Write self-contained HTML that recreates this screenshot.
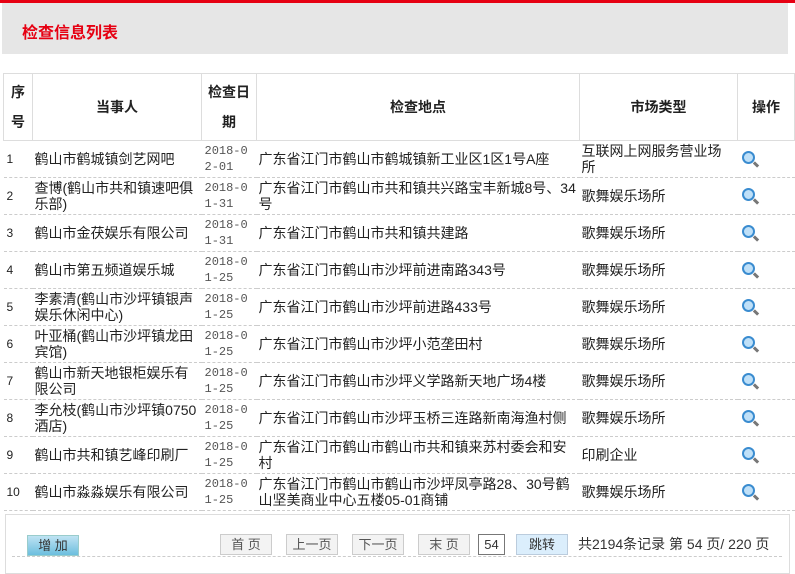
<!DOCTYPE html>
<html><head><meta charset="utf-8"><style>
*{margin:0;padding:0;box-sizing:border-box}
body{width:795px;height:567px;overflow:hidden;background:#fff;font-family:"Liberation Sans","Noto Sans CJK SC",sans-serif;font-size:14px;color:#333;position:relative}
.top{position:absolute;left:0;top:0;width:795px;height:3px;background:#e60012}
.hd{position:absolute;left:2px;top:3px;width:786px;height:51px;background:#e6e6e6}
.hd span{position:absolute;left:20px;top:16px;color:#e60012;font-weight:bold;font-size:16px}
table{position:absolute;left:3px;top:73px;border-collapse:collapse;table-layout:fixed;width:791px}
th{border:1px solid #ddd;font-weight:bold;font-size:14px;color:#222;height:67px;line-height:30px}
td{border-bottom:1px dashed #ccc;height:37px;line-height:16px;vertical-align:middle;padding-left:2px;padding-right:0;color:#222}
td.n{font-size:12px;padding-left:3px}
td.d{font-size:12px;font-family:"Liberation Mono",monospace;color:#555;padding-left:3px}
td.m{padding-right:14px}
.ic{display:inline-block;width:13px;height:13px;border:2px solid #3a8cd0;border-radius:50%;background:#bfe0f8;position:relative;margin-left:2px}
.ic:after{content:"";position:absolute;left:9px;top:10px;width:6px;height:3px;background:#777;transform:rotate(45deg)}
.pg{position:absolute;left:5px;top:514px;width:785px;height:60px;border:1px solid #ddd}
.b{position:absolute;top:534px;height:21px;border:1px solid #ccc;background:#f3f3f3;font-size:13px;color:#555;text-align:center;line-height:19px}
</style></head><body>
<div class="top"></div>
<div class="hd"><span>检查信息列表</span></div>
<table>
<colgroup><col style="width:29px"><col style="width:169px"><col style="width:55px"><col style="width:323px"><col style="width:158px"><col style="width:57px"></colgroup>
<tr><th>序<br>号</th><th>当事人</th><th>检查日<br>期</th><th>检查地点</th><th>市场类型</th><th>操作</th></tr>
<tr><td class="n">1</td><td>鹤山市鹤城镇剑艺网吧</td><td class="d">2018-0<br>2-01</td><td>广东省江门市鹤山市鹤城镇新工业区1区1号A座</td><td class="m">互联网上网服务营业场所</td><td><i class="ic"></i></td></tr>
<tr><td class="n">2</td><td>查博(鹤山市共和镇速吧俱乐部)</td><td class="d">2018-0<br>1-31</td><td>广东省江门市鹤山市共和镇共兴路宝丰新城8号、34号</td><td>歌舞娱乐场所</td><td><i class="ic"></i></td></tr>
<tr><td class="n">3</td><td>鹤山市金茯娱乐有限公司</td><td class="d">2018-0<br>1-31</td><td>广东省江门市鹤山市共和镇共建路</td><td>歌舞娱乐场所</td><td><i class="ic"></i></td></tr>
<tr><td class="n">4</td><td>鹤山市第五频道娱乐城</td><td class="d">2018-0<br>1-25</td><td>广东省江门市鹤山市沙坪前进南路343号</td><td>歌舞娱乐场所</td><td><i class="ic"></i></td></tr>
<tr><td class="n">5</td><td>李素清(鹤山市沙坪镇银声娱乐休闲中心)</td><td class="d">2018-0<br>1-25</td><td>广东省江门市鹤山市沙坪前进路433号</td><td>歌舞娱乐场所</td><td><i class="ic"></i></td></tr>
<tr><td class="n">6</td><td>叶亚桶(鹤山市沙坪镇龙田宾馆)</td><td class="d">2018-0<br>1-25</td><td>广东省江门市鹤山市沙坪小范垄田村</td><td>歌舞娱乐场所</td><td><i class="ic"></i></td></tr>
<tr><td class="n">7</td><td>鹤山市新天地银柜娱乐有限公司</td><td class="d">2018-0<br>1-25</td><td>广东省江门市鹤山市沙坪义学路新天地广场4楼</td><td>歌舞娱乐场所</td><td><i class="ic"></i></td></tr>
<tr><td class="n">8</td><td>李允枝(鹤山市沙坪镇0750酒店)</td><td class="d">2018-0<br>1-25</td><td>广东省江门市鹤山市沙坪玉桥三连路新南海渔村侧</td><td>歌舞娱乐场所</td><td><i class="ic"></i></td></tr>
<tr><td class="n">9</td><td>鹤山市共和镇艺峰印刷厂</td><td class="d">2018-0<br>1-25</td><td>广东省江门市鹤山市鹤山市共和镇来苏村委会和安村</td><td>印刷企业</td><td><i class="ic"></i></td></tr>
<tr><td class="n">10</td><td>鹤山市淼淼娱乐有限公司</td><td class="d">2018-0<br>1-25</td><td>广东省江门市鹤山市鹤山市沙坪凤亭路28、30号鹤山坚美商业中心五楼05-01商铺</td><td>歌舞娱乐场所</td><td><i class="ic"></i></td></tr>
</table>
<div class="pg"></div>
<div style="position:absolute;left:12px;top:556px;width:770px;border-top:1px dashed #ccc"></div>
<div class="b" style="left:27px;top:535px;width:52px;background:linear-gradient(#bfe3f3,#6cbede);border-color:#9cc;color:#333">增 加</div>
<div class="b" style="left:220px;width:52px">首 页</div>
<div class="b" style="left:286px;width:52px">上一页</div>
<div class="b" style="left:352px;width:52px">下一页</div>
<div class="b" style="left:418px;width:52px">末 页</div>
<div class="b" style="left:478px;width:27px;background:#fff;border-color:#777;color:#333">54</div>
<div class="b" style="left:516px;width:52px;background:#dbeefc;border-color:#bcd;color:#333">跳转</div>
<div style="position:absolute;left:578px;top:534px;font-size:14px;color:#333;line-height:20px">共2194条记录 第 54 页/ 220 页</div>
</body></html>
